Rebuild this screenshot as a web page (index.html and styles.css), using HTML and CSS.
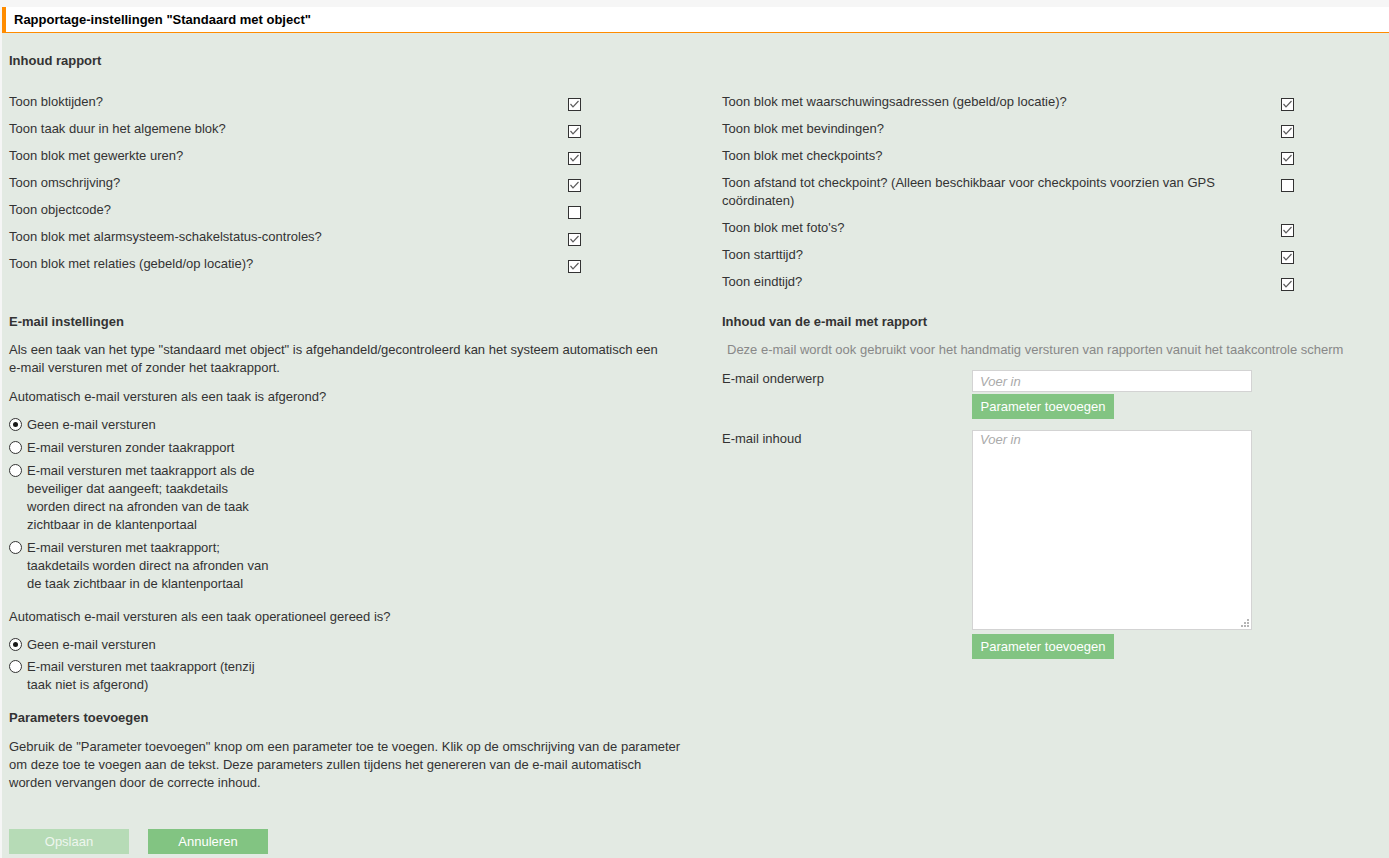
FILE: index.html
```html
<!DOCTYPE html>
<html lang="nl">
<head>
<meta charset="utf-8">
<title>Rapportage-instellingen</title>
<link rel="stylesheet" href="styles.css">
</head>
<body>
<div class="page">
  <div class="titlebar">Rapportage-instellingen "Standaard met object"</div>
  <div class="panel">
    <div class="cols">
      <h3 class="heading first">Inhoud rapport</h3>
      <div></div>

      <div class="checklist">
        <div class="crow"><span class="clabel">Toon bloktijden?</span><span class="cb"><svg viewBox="0 0 11 11"><polyline points="1.5,5 4,7.8 9.5,2"/></svg></span></div>
        <div class="crow"><span class="clabel">Toon taak duur in het algemene blok?</span><span class="cb"><svg viewBox="0 0 11 11"><polyline points="1.5,5 4,7.8 9.5,2"/></svg></span></div>
        <div class="crow"><span class="clabel">Toon blok met gewerkte uren?</span><span class="cb"><svg viewBox="0 0 11 11"><polyline points="1.5,5 4,7.8 9.5,2"/></svg></span></div>
        <div class="crow"><span class="clabel">Toon omschrijving?</span><span class="cb"><svg viewBox="0 0 11 11"><polyline points="1.5,5 4,7.8 9.5,2"/></svg></span></div>
        <div class="crow"><span class="clabel">Toon objectcode?</span><span class="cb"></span></div>
        <div class="crow"><span class="clabel">Toon blok met alarmsysteem-schakelstatus-controles?</span><span class="cb"><svg viewBox="0 0 11 11"><polyline points="1.5,5 4,7.8 9.5,2"/></svg></span></div>
        <div class="crow"><span class="clabel">Toon blok met relaties (gebeld/op locatie)?</span><span class="cb"><svg viewBox="0 0 11 11"><polyline points="1.5,5 4,7.8 9.5,2"/></svg></span></div>
      </div>

      <div class="checklist">
        <div class="crow"><span class="clabel">Toon blok met waarschuwingsadressen (gebeld/op locatie)?</span><span class="cb"><svg viewBox="0 0 11 11"><polyline points="1.5,5 4,7.8 9.5,2"/></svg></span></div>
        <div class="crow"><span class="clabel">Toon blok met bevindingen?</span><span class="cb"><svg viewBox="0 0 11 11"><polyline points="1.5,5 4,7.8 9.5,2"/></svg></span></div>
        <div class="crow"><span class="clabel">Toon blok met checkpoints?</span><span class="cb"><svg viewBox="0 0 11 11"><polyline points="1.5,5 4,7.8 9.5,2"/></svg></span></div>
        <div class="crow"><span class="clabel">Toon afstand tot checkpoint? (Alleen beschikbaar voor checkpoints voorzien van GPS coördinaten)</span><span class="cb"></span></div>
        <div class="crow"><span class="clabel">Toon blok met foto's?</span><span class="cb"><svg viewBox="0 0 11 11"><polyline points="1.5,5 4,7.8 9.5,2"/></svg></span></div>
        <div class="crow"><span class="clabel">Toon starttijd?</span><span class="cb"><svg viewBox="0 0 11 11"><polyline points="1.5,5 4,7.8 9.5,2"/></svg></span></div>
        <div class="crow"><span class="clabel">Toon eindtijd?</span><span class="cb"><svg viewBox="0 0 11 11"><polyline points="1.5,5 4,7.8 9.5,2"/></svg></span></div>
      </div>

      <div class="section">
        <h3 class="heading">E-mail instellingen</h3>
        <p class="text intro mt10">Als een taak van het type "standaard met object" is afgehandeld/gecontroleerd kan het systeem automatisch een e-mail versturen met of zonder het taakrapport.</p>
        <p class="text mt11">Automatisch e-mail versturen als een taak is afgerond?</p>
        <div class="radios">
          <div class="rrow"><span class="rb on"></span><span class="rlabel">Geen e-mail versturen</span></div>
          <div class="rrow"><span class="rb"></span><span class="rlabel">E-mail versturen zonder taakrapport</span></div>
          <div class="rrow"><span class="rb"></span><span class="rlabel">E-mail versturen met taakrapport als de beveiliger dat aangeeft; taakdetails worden direct na afronden van de taak zichtbaar in de klantenportaal</span></div>
          <div class="rrow"><span class="rb"></span><span class="rlabel">E-mail versturen met taakrapport; taakdetails worden direct na afronden van de taak zichtbaar in de klantenportaal</span></div>
        </div>
        <p class="text mt15">Automatisch e-mail versturen als een taak operationeel gereed is?</p>
        <div class="radios tight">
          <div class="rrow"><span class="rb on"></span><span class="rlabel">Geen e-mail versturen</span></div>
          <div class="rrow"><span class="rb"></span><span class="rlabel">E-mail versturen met taakrapport (tenzij taak niet is afgerond)</span></div>
        </div>
        <h3 class="heading mt15">Parameters toevoegen</h3>
        <p class="text mt11">Gebruik de "Parameter toevoegen" knop om een parameter toe te voegen. Klik op de omschrijving van de parameter om deze toe te voegen aan de tekst. Deze parameters zullen tijdens het genereren van de e-mail automatisch worden vervangen door de correcte inhoud.</p>
        <div class="actions">
          <button class="btn disabled" type="button">Opslaan</button>
          <button class="btn" type="button">Annuleren</button>
        </div>
      </div>

      <div class="section">
        <h3 class="heading">Inhoud van de e-mail met rapport</h3>
        <p class="note">Deze e-mail wordt ook gebruikt voor het handmatig versturen van rapporten vanuit het taakcontrole scherm</p>
        <div class="frow first-row">
          <label class="flabel">E-mail onderwerp</label>
          <div class="field">
            <input class="input" type="text" placeholder="Voer in">
            <button class="btn param" type="button">Parameter toevoegen</button>
          </div>
        </div>
        <div class="frow second-row">
          <label class="flabel">E-mail inhoud</label>
          <div class="field">
            <div class="tawrap">
              <textarea class="textarea" placeholder="Voer in"></textarea>
              <svg class="grip" viewBox="0 0 8 8"><rect x="6" y="0" width="2" height="2"/><rect x="3" y="3" width="2" height="2"/><rect x="6" y="3" width="2" height="2"/><rect x="0" y="6" width="2" height="2"/><rect x="3" y="6" width="2" height="2"/><rect x="6" y="6" width="2" height="2"/></svg>
            </div>
            <button class="btn param param2" type="button">Parameter toevoegen</button>
          </div>
        </div>
      </div>
    </div>
  </div>
</div>
</body>
</html>
```

FILE: styles.css
```css
* { box-sizing: border-box; }

html, body {
  margin: 0;
  padding: 0;
}

body {
  background: #f6f6f6;
  font-family: "Liberation Sans", Arial, sans-serif;
  font-size: 13px;
  line-height: 18px;
  color: #333;
}

.page {
  margin-left: 2px;
  background: #fff;
}

.titlebar {
  margin-top: 7px;
  border-left: 4px solid #ff8c00;
  border-bottom: 1px solid #ff8c00;
  background: #fff;
  padding: 0 8px;
  height: 26px;
  line-height: 25px;
  font-weight: bold;
  color: #000;
}

.panel {
  background: #e3eae3;
  padding: 19px 7px 4px;
}

.cols {
  display: grid;
  grid-template-columns: 690px 1fr;
  column-gap: 23px;
  align-items: start;
}

.heading {
  margin: 0;
  font-size: 13px;
  font-weight: bold;
  line-height: 18px;
  color: #333;
}

.heading.first {
  margin-bottom: 19px;
}

.checklist {
  display: flex;
  flex-direction: column;
}

.crow {
  display: grid;
  grid-template-columns: 552px 13px;
  column-gap: 7px;
  align-items: start;
  padding: 4px 0 5px;
}

.cb {
  display: block;
  width: 13px;
  height: 13px;
  margin-top: 5px;
  border: 1px solid #333;
  background: #fff;
}

.cb svg {
  display: block;
  width: 11px;
  height: 11px;
}

.cb polyline {
  fill: none;
  stroke: #5c5c5c;
  stroke-width: 1.2;
}

.section {
  margin-top: 17px;
}

.text {
  margin: 0;
  max-width: 674px;
}

.text.intro {
  max-width: 654px;
}

.mt10 { margin-top: 10px; }
.mt11 { margin-top: 11px; }
.mt15 { margin-top: 15px; }

.radios {
  display: flex;
  flex-direction: column;
  gap: 5px;
  margin-top: 10px;
}

.radios.tight {
  gap: 4px;
}

.rrow {
  display: flex;
  align-items: flex-start;
  gap: 5px;
}

.rb {
  flex: none;
  width: 13px;
  height: 13px;
  margin-top: 2px;
  border: 1px solid #333;
  border-radius: 50%;
  background: #fff;
  display: flex;
  align-items: center;
  justify-content: center;
}

.rb.on::after {
  content: "";
  width: 5px;
  height: 5px;
  border-radius: 50%;
  background: #1a1a1a;
}

.rlabel {
  max-width: 245px;
}

.actions {
  display: flex;
  gap: 19px;
  margin-top: 37px;
}

.btn {
  height: 25px;
  border: 0;
  padding: 0;
  background: #82c482;
  color: #fff;
  font-family: "Liberation Sans", Arial, sans-serif;
  font-size: 13px;
  line-height: 25px;
  white-space: nowrap;
  text-align: center;
  cursor: pointer;
}

.actions .btn {
  width: 120px;
}

.btn.disabled {
  background: #b6dbb6;
  color: #eef6ee;
  cursor: default;
}

.note {
  margin: 10px 0 0;
  padding-left: 5px;
  color: #888;
}

.frow {
  display: grid;
  grid-template-columns: 250px 280px;
  align-items: start;
}

.frow.first-row { margin-top: 11px; }
.frow.second-row { margin-top: 11px; }

.flabel {
  line-height: 18px;
}

.field {
  display: flex;
  flex-direction: column;
  align-items: flex-start;
}

.input {
  display: block;
  width: 280px;
  height: 22px;
  border: 1px solid #d3d3d3;
  background: #fff;
  padding: 0 7px;
  font-family: "Liberation Sans", Arial, sans-serif;
  font-size: 13px;
  color: #333;
  outline: none;
}

.input::placeholder,
.textarea::placeholder {
  color: #aaa;
  font-style: italic;
}

.param {
  margin-top: 2px;
  width: 142px;
}

.param2 {
  margin-top: 4px;
}

.tawrap {
  position: relative;
  width: 280px;
  height: 200px;
}

.textarea {
  display: block;
  width: 280px;
  height: 200px;
  border: 1px solid #d3d3d3;
  background: #fff;
  padding: 0 7px;
  font-family: "Liberation Sans", Arial, sans-serif;
  font-size: 13px;
  line-height: 18px;
  color: #333;
  resize: none;
  outline: none;
}

.grip {
  position: absolute;
  right: 3px;
  bottom: 3px;
  width: 8px;
  height: 8px;
  fill: #b5b5b5;
}
```
